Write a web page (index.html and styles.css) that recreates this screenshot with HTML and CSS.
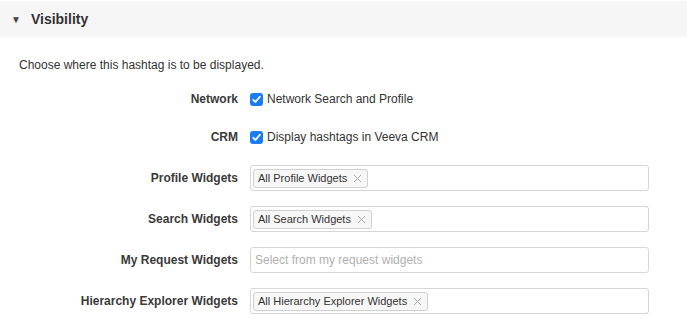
FILE: index.html
```html
<!DOCTYPE html>
<html lang="en">
  <head>
    <meta charset="UTF-8" />
    <meta name="viewport" content="width=device-width, initial-scale=1.0" />
    <title>Hashtag Visibility</title>
    <link rel="stylesheet" href="styles.css">
  </head>
  <body>
    <div class="section-header">
      <span class="caret">&#9660;</span>
      <h2>Visibility</h2>
    </div>

    <p class="description">Choose where this hashtag is to be displayed.</p>

    <div class="form">
      <div class="row check-row">
        <span class="label">Network</span>
        <label class="check">
          <span class="box">
            <svg width="9" height="9" viewBox="0 0 9 9"><path d="M1.3 4.8 L3.5 7 L7.8 1.8" fill="none" stroke="#fff" stroke-width="1.8" stroke-linecap="round" stroke-linejoin="round"/></svg>
          </span>
          Network Search and Profile
        </label>
      </div>
      <div class="row check-row last-check">
        <span class="label">CRM</span>
        <label class="check">
          <span class="box">
            <svg width="9" height="9" viewBox="0 0 9 9"><path d="M1.3 4.8 L3.5 7 L7.8 1.8" fill="none" stroke="#fff" stroke-width="1.8" stroke-linecap="round" stroke-linejoin="round"/></svg>
          </span>
          Display hashtags in Veeva CRM
        </label>
      </div>

      <div class="row input-row">
        <span class="label">Profile Widgets</span>
        <div class="multi-select">
          <span class="tag">All Profile Widgets
            <svg class="remove" width="9" height="9" viewBox="0 0 9 9"><path d="M1 1 L8 8 M8 1 L1 8" stroke="#a8a8a8" stroke-width="1"/></svg>
          </span>
        </div>
      </div>
      <div class="row input-row">
        <span class="label">Search Widgets</span>
        <div class="multi-select">
          <span class="tag">All Search Widgets
            <svg class="remove" width="9" height="9" viewBox="0 0 9 9"><path d="M1 1 L8 8 M8 1 L1 8" stroke="#a8a8a8" stroke-width="1"/></svg>
          </span>
        </div>
      </div>
      <div class="row input-row">
        <span class="label">My Request Widgets</span>
        <div class="multi-select">
          <span class="placeholder">Select from my request widgets</span>
        </div>
      </div>
      <div class="row input-row">
        <span class="label">Hierarchy Explorer Widgets</span>
        <div class="multi-select">
          <span class="tag">All Hierarchy Explorer Widgets
            <svg class="remove" width="9" height="9" viewBox="0 0 9 9"><path d="M1 1 L8 8 M8 1 L1 8" stroke="#a8a8a8" stroke-width="1"/></svg>
          </span>
        </div>
      </div>
    </div>
  </body>
</html>
```

FILE: styles.css
```css
body {
  margin: 0;
  font-family: "Liberation Sans", Arial, sans-serif;
  font-size: 12px;
  color: #333;
  background-color: #fff;
}

.section-header {
  display: flex;
  align-items: center;
  height: 36px;
  margin-top: 1px;
  padding-left: 11px;
  background-color: #f6f6f6;
}
.section-header .caret {
  font-size: 10px;
  color: #444;
  margin-right: 10px;
}
.section-header h2 {
  margin: 0;
  font-size: 14px;
  font-weight: bold;
  color: #333;
}

.description {
  margin: 19px 0 16px 19px;
  line-height: 18px;
}

.row {
  display: flex;
  align-items: center;
}
.row .label {
  width: 238px;
  margin-right: 12px;
  text-align: right;
  font-weight: bold;
  color: #3a3a3a;
}
.check-row {
  height: 18px;
  margin-bottom: 20px;
}
.check-row.last-check {
  margin-bottom: 19px;
}
.input-row {
  height: 26px;
  margin-bottom: 15px;
}

.check {
  display: flex;
  align-items: center;
  gap: 4px;
}
.check .box {
  display: flex;
  align-items: center;
  justify-content: center;
  width: 13px;
  height: 13px;
  border-radius: 3px;
  background-color: #1a7cf2;
}

.multi-select {
  display: flex;
  align-items: center;
  box-sizing: border-box;
  width: 399px;
  height: 26px;
  padding: 0 2px;
  border: 1px solid #d6d6d6;
  border-radius: 3px;
}
.tag {
  display: flex;
  align-items: center;
  gap: 6px;
  box-sizing: border-box;
  height: 19px;
  padding: 0 5px 0 4px;
  border: 1px solid #d0d0d0;
  border-radius: 3px;
  background-color: #f7f7f7;
  font-size: 11px;
  color: #333;
}
.placeholder {
  padding-left: 2px;
  color: #b0b0b0;
}
```
